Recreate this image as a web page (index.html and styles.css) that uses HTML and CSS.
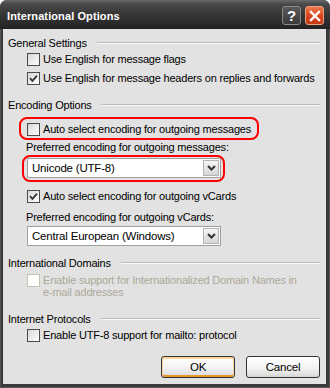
FILE: index.html
```html
<!DOCTYPE html>
<html>
<head>
<meta charset="utf-8">
<link rel="stylesheet" href="styles.css">
</head>
<body>
<div class="window">
  <div class="titlebar">
    <span class="title">International Options</span>
    <div class="tb-buttons">
      <div class="tb-btn help">?</div>
      <div class="tb-btn close">
        <svg width="12" height="12" viewBox="0 0 12 12"><path d="M2 2 L10 10 M10 2 L2 10" stroke="#fff" stroke-width="2.4" stroke-linecap="square"/></svg>
      </div>
    </div>
  </div>
  <div class="content">
    <div class="group-head g1"><span>General Settings</span><span class="rule"></span></div>
    <div class="cb-row r1"><span class="cb"></span><span>Use English for message flags</span></div>
    <div class="cb-row r2"><span class="cb checked"><svg width="9" height="9" viewBox="0 0 9 9"><path d="M1 4.2 L3.4 6.8 L8 1.6" fill="none" stroke="#333" stroke-width="1.8"/></svg></span><span>Use English for message headers on replies and forwards</span></div>

    <div class="group-head g2"><span>Encoding Options</span><span class="rule"></span></div>
    <div class="mark mark1">
      <div class="cb-row"><span class="cb"></span><span>Auto select encoding for outgoing messages</span></div>
    </div>
    <div class="field-label l1">Preferred encoding for outgoing messages:</div>
    <div class="mark mark2">
      <div class="select"><span class="sel-text">Unicode (UTF-8)</span><span class="sel-btn"><svg width="9" height="6" viewBox="0 0 9 6"><path d="M1 1 L4.5 4.5 L8 1" fill="none" stroke="#333" stroke-width="2"/></svg></span></div>
    </div>
    <div class="cb-row r4"><span class="cb checked"><svg width="9" height="9" viewBox="0 0 9 9"><path d="M1 4.2 L3.4 6.8 L8 1.6" fill="none" stroke="#333" stroke-width="1.8"/></svg></span><span>Auto select encoding for outgoing vCards</span></div>
    <div class="field-label l2">Preferred encoding for outgoing vCards:</div>
    <div class="select s2"><span class="sel-text">Central European (Windows)</span><span class="sel-btn"><svg width="9" height="6" viewBox="0 0 9 6"><path d="M1 1 L4.5 4.5 L8 1" fill="none" stroke="#333" stroke-width="2"/></svg></span></div>

    <div class="group-head g3"><span>International Domains</span><span class="rule"></span></div>
    <div class="cb-row disabled r5"><span class="cb"></span><span class="multi">Enable support for Internationalized Domain Names in<br>e-mail addresses</span></div>

    <div class="group-head g4"><span>Internet Protocols</span><span class="rule"></span></div>
    <div class="cb-row r6"><span class="cb"></span><span>Enable UTF-8 support for mailto: protocol</span></div>

    <div class="buttons">
      <div class="btn default">OK</div>
      <div class="btn">Cancel</div>
    </div>
  </div>
</div>
</body>
</html>
```
FILE: styles.css
```css
html, body {
  margin: 0;
  padding: 0;
  background: #fff;
}
.window {
  width: 330px;
  height: 388px;
  display: flex;
  flex-direction: column;
  background: #3a3a3a;
  border-radius: 7px 7px 0 0;
  overflow: hidden;
  box-sizing: border-box;
  box-shadow: inset 0 0 0 1px #555;
}
.titlebar {
  height: 29px;
  flex: none;
  display: flex;
  align-items: center;
  justify-content: space-between;
  padding: 0 6px 0 7px;
  background: linear-gradient(to bottom, #6a6a6a 0px, #4a4a4a 4px, #3a3a3a 12px, #2c2c2c 22px, #222 29px);
  border-radius: 7px 7px 0 0;
}
.title {
  font-family: "Liberation Sans", Arial, sans-serif;
  font-weight: bold;
  font-size: 11px;
  letter-spacing: 0.1px;
  color: #fff;
  margin-top: 3px;
}
.tb-buttons {
  display: flex;
  gap: 4px;
  margin-top: 2px;
}
.tb-btn {
  width: 19px;
  height: 19px;
  box-sizing: border-box;
  border-radius: 3px;
  display: flex;
  align-items: center;
  justify-content: center;
}
.help {
  background: linear-gradient(to bottom, #5a5a5a, #3a3a3a);
  border: 1px solid #8a8a8a;
  color: #fff;
  font-family: "Liberation Sans", Arial, sans-serif;
  font-weight: bold;
  font-size: 15px;
}
.close {
  background: linear-gradient(to bottom, #f07a4e, #d8461e 50%, #c43a16);
  border: 1px solid #e8a080;
}
.content {
  flex: 1;
  margin: 0 4px 4px 3px;
  background: #e2e2e2;
  padding: 7px 6px 6px 5px;
  font-family: "Liberation Sans", Arial, sans-serif;
  font-size: 11px;
  letter-spacing: -0.2px;
  color: #000;
  display: flex;
  flex-direction: column;
  align-items: stretch;
}
.group-head {
  display: flex;
  align-items: center;
  height: 14px;
  line-height: 14px;
}
.group-head .rule {
  flex: 1;
  height: 0;
  border-top: 1px solid #b9b9b9;
  border-bottom: 1px solid #fafafa;
  margin-left: 10px;
}
.g1 { }
.g2 { margin-top: 13px; }
.g2 .rule { margin-left: 9px; }
.g3 { margin-top: 10px; }
.g3 .rule { margin-left: 10px; }
.g4 { margin-top: 14px; }
.g4 .rule { margin-left: 10px; }
.cb-row {
  display: flex;
  align-items: flex-start;
  gap: 3px;
  line-height: 13px;
  padding-left: 19px;
}
.cb {
  width: 13px;
  height: 13px;
  box-sizing: border-box;
  flex: none;
  border: 1px solid #4c4c4c;
  background: linear-gradient(135deg, #d6d6d6 0%, #ececec 50%, #fbfbfb 100%);
  display: flex;
  align-items: center;
  justify-content: center;
}
.r1 { margin-top: 3px; }
.r2 { margin-top: 6px; }
.r4 { margin-top: 8px; }
.r5 { margin-top: 4px; }
.r6 { margin-top: 3px; }
.disabled { color: #aca899; }
.disabled .cb {
  border-color: #c5c2b2;
  background: #fff;
}
.multi { line-height: 12px; }
.mark {
  align-self: flex-start;
  border: 2px solid #ff0000;
  border-radius: 8px;
}
.mark .cb-row { padding-left: 0; }
.mark1 {
  margin-top: 5px;
  margin-left: 11px;
  padding: 4px 6px 2px 6px;
}
.mark2 {
  margin-top: 1px;
  margin-left: 14px;
  padding: 1px 2px 2px 3px;
}
.field-label {
  line-height: 14px;
  padding-left: 18px;
}
.l2 { margin-top: 7px; }
.select {
  width: 194px;
  height: 20px;
  box-sizing: border-box;
  background: #fff;
  border: 1px solid #a0a0a0;
  display: flex;
  align-items: center;
  justify-content: space-between;
  padding: 1px;
}
.sel-text {
  padding-left: 3px;
  line-height: 16px;
  font-size: 11.5px;
}
.sel-btn {
  width: 16px;
  height: 16px;
  box-sizing: border-box;
  border: 1px solid #b4b4b4;
  background: linear-gradient(to bottom, #f6f6f6, #d6d6d6);
  display: flex;
  align-items: center;
  justify-content: center;
}
.s2 {
  margin-top: 2px;
  margin-left: 19px;
}
.buttons {
  margin-top: 14px;
  display: flex;
  justify-content: flex-end;
  gap: 11px;
}
.btn {
  width: 74px;
  height: 22px;
  box-sizing: border-box;
  border: 1px solid #333;
  border-radius: 3px;
  background: linear-gradient(to bottom, #ffffff 0%, #f4f4f4 50%, #e2e2e2 85%, #d2d2d2 100%);
  display: flex;
  align-items: center;
  justify-content: center;
  font-size: 11.5px;
}
.btn.default {
  box-shadow: inset 0 1px 0 1px #ffd69a, inset 0 -1px 0 1px #e8992c;
}
```
